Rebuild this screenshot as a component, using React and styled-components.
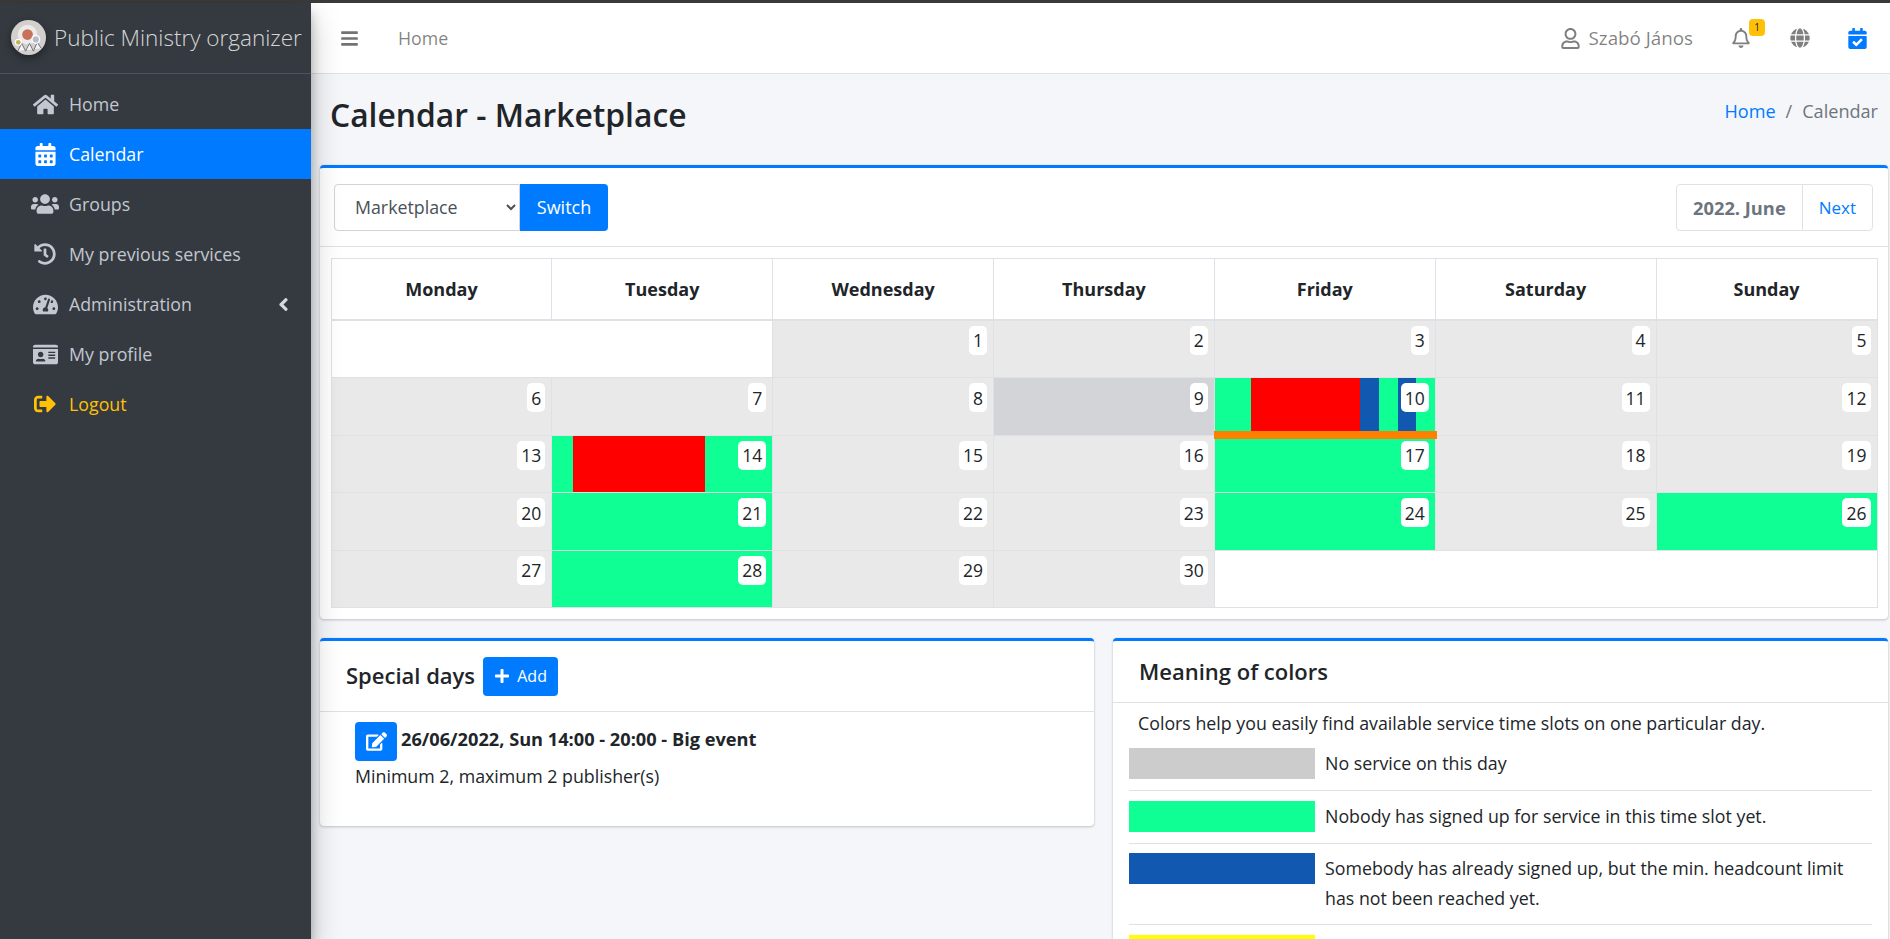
import React from "react";
import styled, { createGlobalStyle } from "styled-components";
import {
  FaHome, FaCalendarAlt, FaUsers, FaHistory, FaTachometerAlt, FaIdCard, FaSignOutAlt,
  FaAngleLeft, FaBars, FaRegUser, FaRegBell, FaGlobe, FaCalendarCheck, FaEdit, FaPlus,
} from "react-icons/fa";

const FONT = `"Open Sans", "Noto Sans", sans-serif`;

const Global = createGlobalStyle`
  html, body { margin: 0; height: 100%; overflow: hidden; }
  body { font-family: ${FONT}; font-size: 17.8px; color: #212529; background: #f4f6f9; }
  * { box-sizing: border-box; }
`;

const Shell = styled.div`
  height: 939px;
  display: flex;
  flex-direction: column;
  overflow: hidden;
`;
const TopEdge = styled.div`
  height: 3px;
  flex: none;
  background: #3a3a3a;
`;
const Body = styled.div`
  flex: 1;
  min-height: 0;
  display: flex;
`;
const Sidebar = styled.aside`
  width: 311px;
  flex: none;
  background: #343a40;
  box-shadow: 0 14px 28px rgba(0,0,0,.25), 0 10px 10px rgba(0,0,0,.22);
  position: relative;
  z-index: 2;
`;
const Brand = styled.div`
  height: 71px;
  display: flex;
  align-items: center;
  padding: 0 0 2px 11px;
  gap: 8px;
  border-bottom: 1px solid #4b545c;
  color: rgba(255,255,255,.8);
  font-size: 22.5px;
  font-weight: 300;
  white-space: nowrap;
`;
const Logo = styled.svg`
  width: 35px;
  height: 35px;
  flex: none;
  filter: drop-shadow(0 3px 4px rgba(0,0,0,.4));
`;
const Nav = styled.nav`
  padding-top: 5px;
`;
const NavItem = styled.div`
  height: 50px;
  display: flex;
  align-items: center;
  position: relative;
  color: ${(p) => (p.$active ? "#fff" : p.$warn ? "#ffc107" : "#c2c7d0")};
  background: ${(p) => (p.$active ? "#007bff" : "transparent")};
  font-size: 17.8px;
`;
const NavIcon = styled.span`
  width: 69px;
  flex: none;
  display: flex;
  justify-content: center;
  padding-left: 21px;
  font-size: ${(p) => p.$size}px;
  line-height: 0;
`;
const NavArrow = styled.span`
  position: absolute;
  right: 17px;
  top: 15px;
  font-size: 21px;
  line-height: 0;
  color: #d5d9df;
`;

const Main = styled.main`
  flex: 1;
  min-width: 0;
  display: flex;
  flex-direction: column;
`;
const TopBar = styled.header`
  height: 71px;
  flex: none;
  background: #fff;
  border-bottom: 1px solid #dee2e6;
  display: flex;
  align-items: center;
  color: rgba(0,0,0,.5);
  padding-left: 29px;
`;
const BarsIcon = styled.span`
  font-size: 19px;
  line-height: 0;
  color: rgba(0,0,0,.55);
  width: 58px;
`;
const TopLink = styled.span`
  font-size: 17.8px;
`;
const TopRight = styled.div`
  margin-left: auto;
  display: flex;
  align-items: center;
  padding-right: 22px;
`;
const UserName = styled.span`
  display: flex;
  align-items: center;
  gap: 8px;
  font-size: 18.8px;
  svg { font-size: 21px; }
`;
const Bell = styled.span`
  position: relative;
  margin-left: 38px;
  line-height: 0;
  font-size: 20px;
`;
const Badge = styled.span`
  position: absolute;
  top: -9px;
  right: -14px;
  width: 16px;
  height: 17px;
  border-radius: 4px;
  background: #ffc107;
  color: #212529;
  font-size: 10px;
  line-height: 17px;
  text-align: center;
`;
const Globe = styled.span`
  margin-left: 39px;
  line-height: 0;
  font-size: 20px;
`;
const CalCheck = styled.span`
  margin-left: 37px;
  line-height: 0;
  font-size: 21px;
  color: #007bff;
`;

const Content = styled.div`
  flex: 1;
  min-height: 0;
  padding: 0 2px 0 9px;
`;
const PageHead = styled.div`
  height: 91px;
  display: flex;
  justify-content: space-between;
  padding: 0 10px;
`;
const Title = styled.h1`
  margin: 21px 0 0;
  font-size: 31.8px;
  font-weight: 600;
  line-height: 40px;
`;
const Crumbs = styled.div`
  margin-top: 22px;
  font-size: 18.1px;
  color: #6c757d;
  display: flex;
  gap: 10px;
  line-height: 30px;
`;
const Link = styled.span`
  color: #007bff;
`;
const Card = styled.section`
  background: #fff;
  border-top: 3px solid #007bff;
  border-radius: 4px;
  box-shadow: 0 0 1px rgba(0,0,0,.125), 0 1px 3px rgba(0,0,0,.2);
  margin-bottom: 19px;
`;
const CalToolbar = styled.div`
  height: 79px;
  border-bottom: 1px solid #dee2e6;
  display: flex;
  align-items: center;
  justify-content: space-between;
  padding: 0 15px 0 14px;
`;
const SwitchGroup = styled.div`
  display: flex;
`;
const Select = styled.select`
  width: 186px;
  height: 47px;
  padding: 0 16px;
  border: 1px solid #ced4da;
  border-radius: 4px 0 0 4px;
  background: #fff;
  color: #495057;
  font: 17.8px ${FONT};
`;
const SwitchBtn = styled.button`
  width: 88px;
  height: 47px;
  border: 0;
  border-radius: 0 4px 4px 0;
  background: #007bff;
  color: #fff;
  font: 18px ${FONT};
`;
const Pager = styled.div`
  height: 47px;
  display: flex;
  border: 1px solid #dee2e6;
  border-radius: 4px;
  align-items: stretch;
`;
const PagerItem = styled.span`
  display: flex;
  align-items: center;
  padding: 0 16px;
  font-size: ${(p) => (p.$bold ? 18.3 : 17)}px;
  font-weight: ${(p) => (p.$bold ? 700 : 400)};
  color: ${(p) => (p.$bold ? "#6c757d" : "#007bff")};
  border-left: ${(p) => (p.$bold ? "0" : "1px solid #dee2e6")};
`;
const CalWrap = styled.div`
  padding: 11px 10.5px;
`;
const Table = styled.table`
  width: 100%;
  table-layout: fixed;
  border-collapse: collapse;
  border: 1px solid #dee2e6;
`;
const Th = styled.th`
  height: 61px;
  border: 1px solid #dee2e6;
  border-bottom-width: 2px;
  font-size: 18px;
  font-weight: 700;
`;
const Td = styled.td`
  padding: 0;
  border: 1px solid #dee2e6;
  background: #fff;
`;
const DayFill = styled.div`
  position: relative;
  height: 56.6px;
  display: flex;
  background: ${(p) => p.$bg};
`;
const Segment = styled.div`
  flex: ${(p) => p.$size} 0 0;
  background: ${(p) => p.$color};
`;
const DayNumber = styled.span`
  position: absolute;
  top: 5px;
  right: 6px;
  padding: 0 4px;
  height: 29px;
  border-radius: 5px;
  background: #fff;
  display: flex;
  align-items: center;
  justify-content: center;
  font-size: 17.5px;
`;
const OrangeBar = styled.div`
  position: absolute;
  left: -1px;
  right: -2px;
  bottom: -4px;
  height: 8px;
  background: #ff8000;
  z-index: 1;
`;

const TwoCols = styled.div`
  display: grid;
  grid-template-columns: 774px 775px;
  column-gap: 19px;
  align-items: start;
`;
const CardHeader = styled.div`
  height: ${(p) => p.$h}px;
  border-bottom: 1px solid #dee2e6;
  display: flex;
  align-items: center;
  padding-left: 26px;
  gap: 8px;
`;
const CardTitle = styled.h3`
  margin: 0 0 2px;
  font-size: 22px;
  font-weight: 600;
`;
const AddBtn = styled.button`
  width: 75px;
  height: 39px;
  border: 0;
  border-radius: 4px;
  background: #007bff;
  color: #fff;
  font: 16px ${FONT};
  display: flex;
  align-items: center;
  justify-content: center;
  gap: 7px;
  svg { font-size: 16px; }
`;
const SpecialBody = styled.div`
  padding: 10px 35px 32px;
  height: 114px;
`;
const EventLine = styled.div`
  display: flex;
  align-items: center;
  gap: 4px;
  font-weight: 700;
  font-size: 18.2px;
`;
const EventText = styled.span`
  padding-bottom: 5px;
`;
const EditBtn = styled.span`
  width: 42px;
  height: 39px;
  border-radius: 4px;
  background: #007bff;
  color: #fff;
  display: flex;
  align-items: center;
  justify-content: center;
  font-size: 21px;
`;
const EventInfo = styled.div`
  margin-top: 2px;
  line-height: 26px;
`;
const LegendBody = styled.div`
  padding: 5px 16px 0;
`;
const LegendIntro = styled.div`
  line-height: 30px;
  padding-left: 9px;
  margin-bottom: 10px;
`;
const LegendRow = styled.div`
  display: flex;
  gap: 10px;
  padding: 0 0 11px;
  margin-bottom: 9.5px;
  border-bottom: 1px solid #dee2e6;
  line-height: 30px;
`;
const Swatch = styled.div`
  width: 186px;
  height: 31px;
  flex: none;
  background: ${(p) => p.$color};
`;

const GREEN = "#10ff94";
const RED = "#ff0000";
const BLUE = "#1158b0";
const GREY = "#e9e9e9";

const navItems = [
  { icon: <FaHome />, size: 25, label: "Home" },
  { icon: <FaCalendarAlt />, size: 23, label: "Calendar", active: true },
  { icon: <FaUsers />, size: 28, label: "Groups" },
  { icon: <FaHistory />, size: 22, label: "My previous services" },
  { icon: <FaTachometerAlt />, size: 25, label: "Administration", arrow: true },
  { icon: <FaIdCard />, size: 25, label: "My profile" },
  { icon: <FaSignOutAlt />, size: 22, label: "Logout", warn: true },
];
const days = ["Monday", "Tuesday", "Wednesday", "Thursday", "Friday", "Saturday", "Sunday"];
const segments = {
  10: [[36, GREEN], [109, RED], [18, BLUE], [19, GREEN], [18, BLUE], [19, GREEN]],
  14: [[21, GREEN], [132, RED], [67, GREEN]],
};
const dayBg = { 9: "#d3d4d8", 17: GREEN, 21: GREEN, 24: GREEN, 26: GREEN, 28: GREEN };
const weeks = [
  [{ span: 2 }, 1, 2, 3, 4, 5],
  [6, 7, 8, 9, 10, 11, 12],
  [13, 14, 15, 16, 17, 18, 19],
  [20, 21, 22, 23, 24, 25, 26],
  [27, 28, 29, 30, { span: 3 }],
];
const legend = [
  ["#cccccc", "No service on this day"],
  [GREEN, "Nobody has signed up for service in this time slot yet."],
  [BLUE, "Somebody has already signed up, but the min. headcount limit has not been reached yet."],
  ["#ffff00", ""],
];

function BrandLogo() {
  return (
    <Logo viewBox="0 0 36 36">
      <circle cx="18" cy="18" r="18" fill="#d2cfcc" />
      <circle cx="17" cy="15" r="10" fill="#ecebea" />
      <path d="M7 32l4-8 4 8 4-8 4 8 4-9 4 6" fill="#f4f4f4" stroke="#6b7080" strokeWidth="1" />
      <circle cx="17" cy="15" r="5.5" fill="#c9705c" />
      <circle cx="7.5" cy="23" r="3.6" fill="#fff" />
      <circle cx="7.5" cy="23" r="2.4" fill="#c4b25a" />
      <circle cx="25.5" cy="20" r="4.6" fill="#fff" />
      <circle cx="25.5" cy="20" r="3.2" fill="#b8bcc8" />
    </Logo>
  );
}

function DayCell({ day }) {
  const segs = segments[day];
  return (
    <Td>
      <DayFill $bg={dayBg[day] || GREY}>
        {segs && segs.map(([size, color], i) => <Segment key={i} $size={size} $color={color} />)}
        <DayNumber>{day}</DayNumber>
        {day === 10 && <OrangeBar />}
      </DayFill>
    </Td>
  );
}

export default function App() {
  return (
    <Shell>
      <Global />
      <TopEdge />
      <Body>
        <Sidebar>
          <Brand>
            <BrandLogo />
            Public Ministry organizer
          </Brand>
          <Nav>
            {navItems.map((it) => (
              <NavItem key={it.label} $active={it.active} $warn={it.warn}>
                <NavIcon $size={it.size}>{it.icon}</NavIcon>
                {it.label}
                {it.arrow && (
                  <NavArrow>
                    <FaAngleLeft />
                  </NavArrow>
                )}
              </NavItem>
            ))}
          </Nav>
        </Sidebar>
        <Main>
          <TopBar>
            <BarsIcon>
              <FaBars />
            </BarsIcon>
            <TopLink>Home</TopLink>
            <TopRight>
              <UserName>
                <FaRegUser />
                Szabó János
              </UserName>
              <Bell>
                <FaRegBell />
                <Badge>1</Badge>
              </Bell>
              <Globe>
                <FaGlobe />
              </Globe>
              <CalCheck>
                <FaCalendarCheck />
              </CalCheck>
            </TopRight>
          </TopBar>
          <Content>
            <PageHead>
              <Title>Calendar - Marketplace</Title>
              <Crumbs>
                <Link>Home</Link>
                <span>/</span>
                <span>Calendar</span>
              </Crumbs>
            </PageHead>
            <Card>
              <CalToolbar>
                <SwitchGroup>
                  <Select defaultValue="Marketplace">
                    <option>Marketplace</option>
                  </Select>
                  <SwitchBtn>Switch</SwitchBtn>
                </SwitchGroup>
                <Pager>
                  <PagerItem $bold>2022. June</PagerItem>
                  <PagerItem>Next</PagerItem>
                </Pager>
              </CalToolbar>
              <CalWrap>
                <Table>
                  <thead>
                    <tr>
                      {days.map((d) => (
                        <Th key={d}>{d}</Th>
                      ))}
                    </tr>
                  </thead>
                  <tbody>
                    {weeks.map((w, i) => (
                      <tr key={i}>
                        {w.map((d, j) =>
                          typeof d === "object" ? <Td key={j} colSpan={d.span} /> : <DayCell key={j} day={d} />
                        )}
                      </tr>
                    ))}
                  </tbody>
                </Table>
              </CalWrap>
            </Card>
            <TwoCols>
              <Card>
                <CardHeader $h={71}>
                  <CardTitle>Special days</CardTitle>
                  <AddBtn>
                    <FaPlus />
                    Add
                  </AddBtn>
                </CardHeader>
                <SpecialBody>
                  <EventLine>
                    <EditBtn>
                      <FaEdit />
                    </EditBtn>
                    <EventText>26/06/2022, Sun 14:00 - 20:00 - Big event</EventText>
                  </EventLine>
                  <EventInfo>Minimum 2, maximum 2 publisher(s)</EventInfo>
                </SpecialBody>
              </Card>
              <Card>
                <CardHeader $h={62}>
                  <CardTitle>Meaning of colors</CardTitle>
                </CardHeader>
                <LegendBody>
                  <LegendIntro>Colors help you easily find available service time slots on one particular day.</LegendIntro>
                  {legend.map(([c, t]) => (
                    <LegendRow key={c}>
                      <Swatch $color={c} />
                      <div>{t}</div>
                    </LegendRow>
                  ))}
                </LegendBody>
              </Card>
            </TwoCols>
          </Content>
        </Main>
      </Body>
    </Shell>
  );
}
